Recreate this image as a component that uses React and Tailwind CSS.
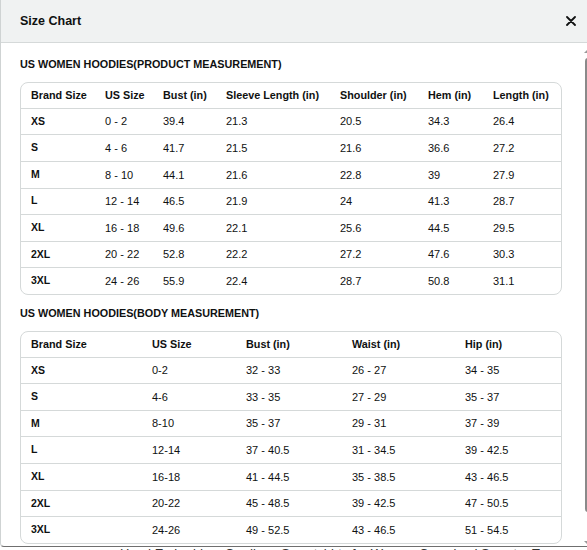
import React from "react";

const product = {
  cols: ["Brand Size", "US Size", "Bust (in)", "Sleeve Length (in)", "Shoulder (in)", "Hem (in)", "Length (in)"],
  rows: [
    ["XS", "0 - 2", "39.4", "21.3", "20.5", "34.3", "26.4"],
    ["S", "4 - 6", "41.7", "21.5", "21.6", "36.6", "27.2"],
    ["M", "8 - 10", "44.1", "21.6", "22.8", "39", "27.9"],
    ["L", "12 - 14", "46.5", "21.9", "24", "41.3", "28.7"],
    ["XL", "16 - 18", "49.6", "22.1", "25.6", "44.5", "29.5"],
    ["2XL", "20 - 22", "52.8", "22.2", "27.2", "47.6", "30.3"],
    ["3XL", "24 - 26", "55.9", "22.4", "28.7", "50.8", "31.1"],
  ],
};

const body = {
  cols: ["Brand Size", "US Size", "Bust (in)", "Waist (in)", "Hip (in)"],
  rows: [
    ["XS", "0-2", "32 - 33", "26 - 27", "34 - 35"],
    ["S", "4-6", "33 - 35", "27 - 29", "35 - 37"],
    ["M", "8-10", "35 - 37", "29 - 31", "37 - 39"],
    ["L", "12-14", "37 - 40.5", "31 - 34.5", "39 - 42.5"],
    ["XL", "16-18", "41 - 44.5", "35 - 38.5", "43 - 46.5"],
    ["2XL", "20-22", "45 - 48.5", "39 - 42.5", "47 - 50.5"],
    ["3XL", "24-26", "49 - 52.5", "43 - 46.5", "51 - 54.5"],
  ],
};

function Table({ data, gridClass }) {
  return (
    <div className="w-[542px] border border-[#d5d9d9] rounded-[8px] overflow-hidden">
      <div className={`grid ${gridClass} h-[26.1px] items-center border-b border-[#d5d9d9]`}>
        {data.cols.map((c) => (
          <div key={c} className="pl-[10px] text-[10.8px] font-bold whitespace-nowrap">
            {c}
          </div>
        ))}
      </div>
      {data.rows.map((r, i) => {
        const last = i === data.rows.length - 1;
        return (
          <div
            key={i}
            className={`grid ${gridClass} items-center ${
              last ? "h-[25.8px]" : "h-[26.6px] border-b border-[#d5d9d9]"
            }`}
          >
            {r.map((v, j) => (
              <div
                key={j}
                className={`pl-[10px] whitespace-nowrap ${
                  j === 0 ? "text-[10.5px] font-bold" : "text-[11px]"
                }`}
              >
                {v}
              </div>
            ))}
          </div>
        );
      })}
    </div>
  );
}

export default function App() {
  return (
    <div className="w-[587px] h-[550px] overflow-hidden bg-white relative text-[#0f1111] font-['Liberation_Sans',Arial,sans-serif]">
      <div className="h-[547px] border-l border-[#cfd3d3] border-b border-b-[#6f6f6f] rounded-bl-[4px] flex flex-col overflow-hidden relative">
        <div className="h-[43px] shrink-0 bg-[#f0f2f2] border-b border-[#d5d9d9] flex items-center justify-between pl-[19px] pr-[8px]">
          <span className="text-[12.5px] font-bold">Size Chart</span>
          <svg width="10" height="10" viewBox="0 0 10 10" className="mr-[3px]">
            <path d="M1 1 L9 9 M9 1 L1 9" stroke="#0f1111" strokeWidth="1.8" strokeLinecap="round" />
          </svg>
        </div>
        <div className="flex-1 pl-[19px] pt-[14.3px]">
          <div className="h-[14px] leading-[14px] text-[10.8px] font-bold whitespace-nowrap">
            US WOMEN HOODIES(PRODUCT MEASUREMENT)
          </div>
          <div className="mt-[10.4px]">
            <Table data={product} gridClass="grid-cols-[74px_58px_63px_114px_88px_65px_78px]" />
          </div>
          <div className="mt-[11.2px] h-[14px] leading-[14px] text-[10.8px] font-bold whitespace-nowrap">
            US WOMEN HOODIES(BODY MEASUREMENT)
          </div>
          <div className="mt-[10.2px]">
            <Table data={body} gridClass="grid-cols-[121px_94px_106px_113px_106px]" />
          </div>
        </div>
        <div className="absolute left-[584px] top-[58px] w-[6px] h-[454px] bg-[#8a8a8a] rounded-[3px]" />
        <div className="absolute left-[583px] top-[50px] w-0 h-0 border-l-[3px] border-r-[3px] border-b-[3px] border-l-transparent border-r-transparent border-b-[#9a9a9a]" />
        <div className="absolute left-[583px] top-[541px] w-0 h-0 border-l-[3px] border-r-[3px] border-t-[3px] border-l-transparent border-r-transparent border-t-[#9a9a9a]" />
      </div>
      <div className="h-[3px] overflow-hidden pl-[120px]">
        <div className="text-[13px] leading-[13px] text-[#333] whitespace-nowrap">
          Hand Embroidery Cardigan Sweatshirts for Women Oversized Sweater Tops
        </div>
      </div>
    </div>
  );
}
